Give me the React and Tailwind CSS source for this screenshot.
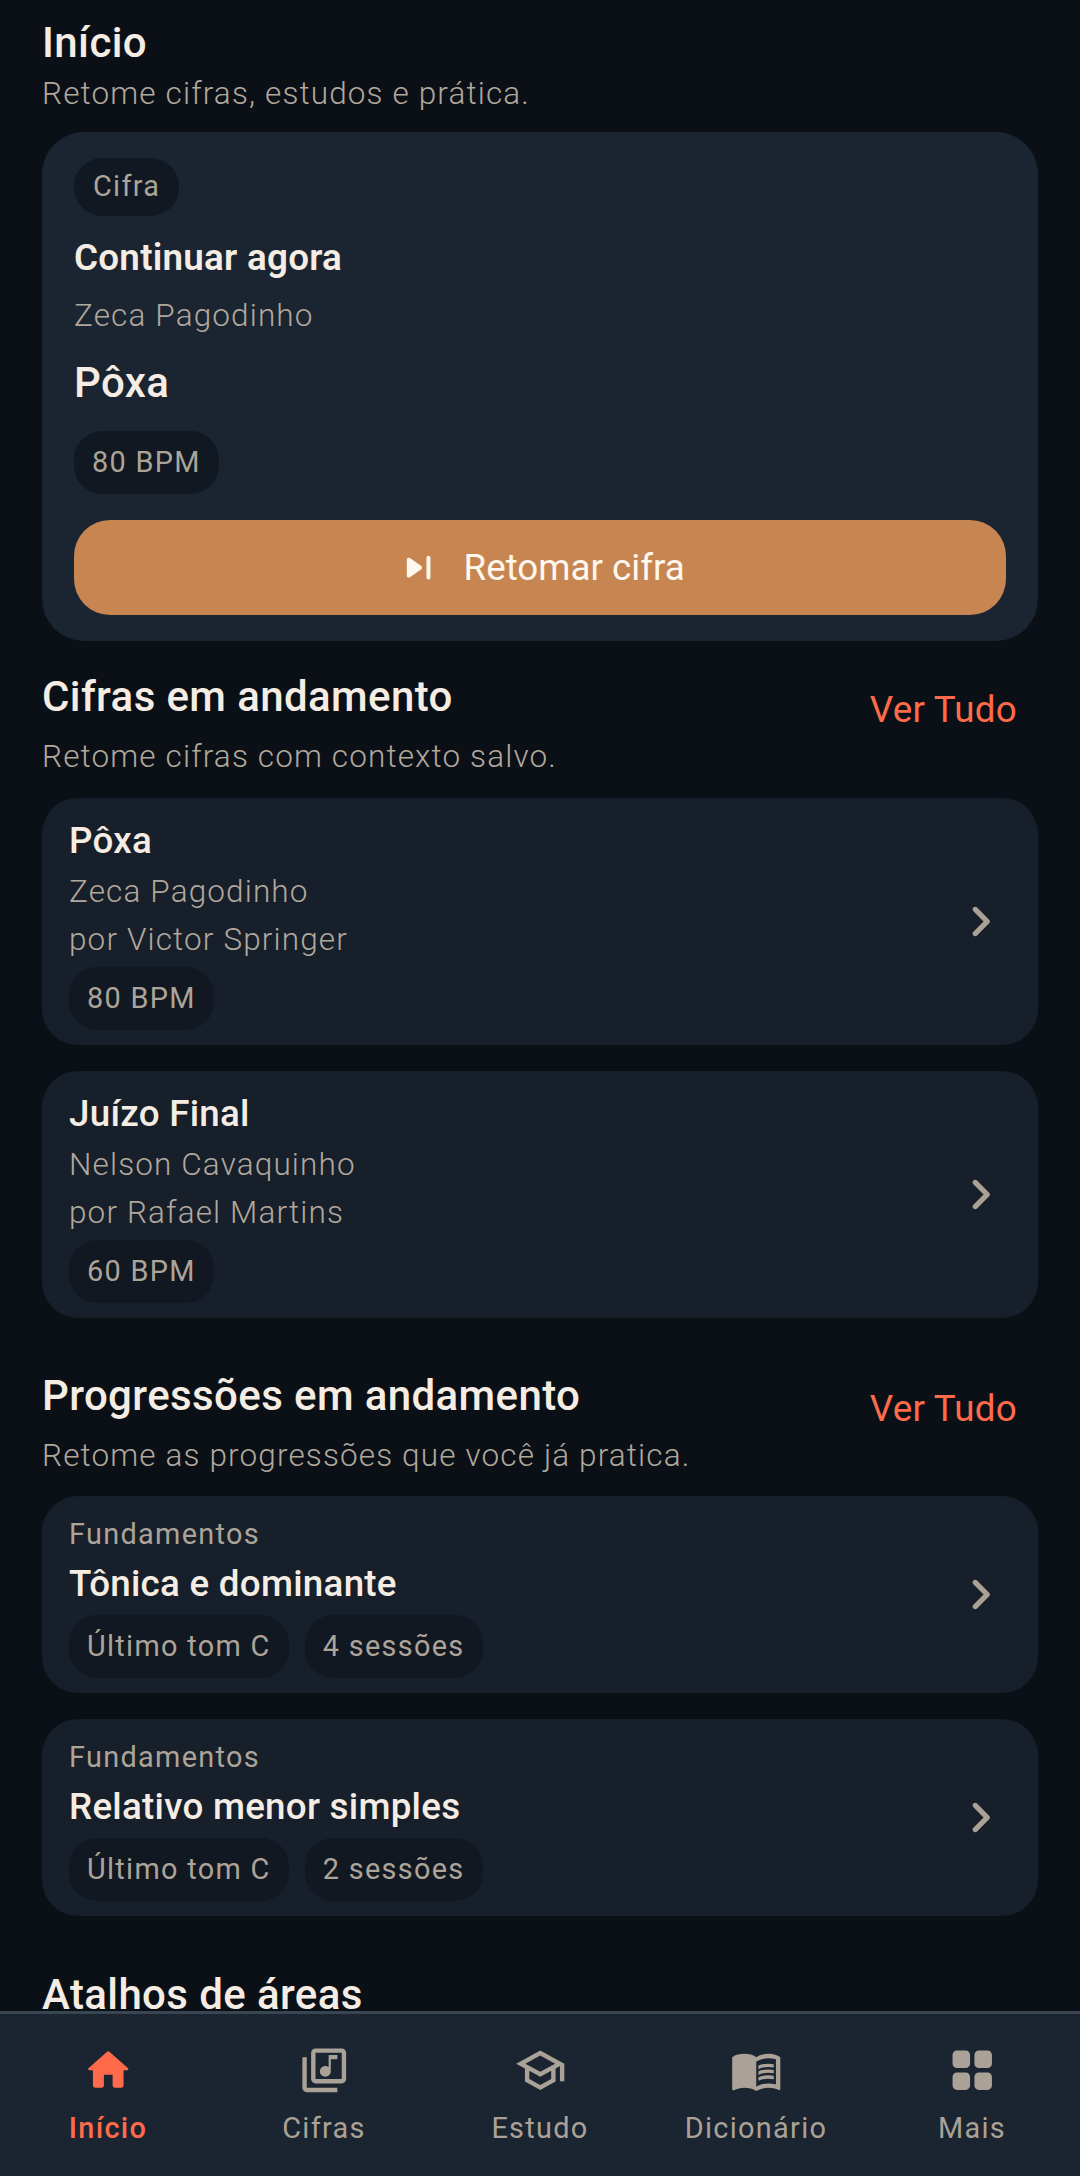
import React from "react";

const Chip = ({ children, className = "h-[63px]" }) => (
  <span className={`inline-flex items-center self-start rounded-[28px] bg-[#111821] px-[18px] text-[28.875px] tracking-[1.31px] text-[#ada499] ${className}`}>
    {children}
  </span>
);

const Chevron = () => (
  <svg width="63" height="63" viewBox="0 0 24 24" fill="#aba297" className="shrink-0">
    <path d="M9.29 6.71c-.39.39-.39 1.02 0 1.41L13.17 12l-3.88 3.88c-.39.39-.39 1.02 0 1.41.39.39 1.02.39 1.41 0l4.59-4.59c.39-.39.39-1.02 0-1.41L10.7 6.7c-.38-.38-1.02-.38-1.41.01z" />
  </svg>
);

const SectionHead = ({ title, sub, link, topClass = "" }) => (
  <div className={`flex items-start justify-between ${topClass}`}>
    <div>
      <h2 className="text-[42px] leading-[50px] font-medium tracking-[0.39px] text-[#f5ede3]">{title}</h2>
      <p className="mt-[14px] text-[31.5px] leading-[42px] font-light tracking-[1.13px] text-[#b1a89d]">{sub}</p>
    </div>
    {link && <span className="mt-[13px] mr-[21px] text-[36.75px] leading-[50px] tracking-[0.26px] text-[#ff6b4a]">{link}</span>}
  </div>
);

const CifraCard = ({ title, artist, by, bpm }) => (
  <div className="flex h-[247px] items-center justify-between rounded-[36px] bg-[#171f2a] pr-[26px] pl-[27px]">
    <div className="flex flex-col self-start pt-[18px]">
      <div className="text-[36.75px] leading-[50px] font-medium tracking-[0.26px] text-[#f5ede3]">{title}</div>
      <div className="mt-[2px] text-[31.5px] leading-[48px] font-light tracking-[1.13px] text-[#b1a89d]">{artist}</div>
      <div className="text-[31.5px] leading-[48px] font-light tracking-[1.13px] text-[#b1a89d]">{by}</div>
      <div className="mt-[3px] flex"><Chip>{bpm}</Chip></div>
    </div>
    <Chevron />
  </div>
);

const ProgCard = ({ title, sessions }) => (
  <div className="flex h-[197px] items-center justify-between rounded-[36px] bg-[#171f2a] pr-[26px] pl-[27px]">
    <div className="flex flex-col self-start pt-[18px]">
      <div className="text-[28.875px] leading-[40px] tracking-[1.31px] text-[#ada499]">Fundamentos</div>
      <div className="mt-[5px] text-[36.75px] leading-[50px] font-medium tracking-[0.26px] text-[#f5ede3]">{title}</div>
      <div className="mt-[6px] flex gap-[16px]">
        <Chip>Último tom C</Chip>
        <Chip>{sessions}</Chip>
      </div>
    </div>
    <Chevron />
  </div>
);

const Icon = ({ color = "#aba297", d }) => (
  <svg width="52.5" height="52.5" viewBox="0 0 24 24" fill={color}>
    <path d={d} />
  </svg>
);

const HOME = "M10 19v-5h4v5c0 .55.45 1 1 1h3c.55 0 1-.45 1-1v-7h1.7c.46 0 .68-.57.33-.87L12.67 3.6c-.38-.34-.96-.34-1.34 0l-8.36 7.53c-.34.3-.13.87.33.87H5v7c0 .55.45 1 1 1h3c.55 0 1-.45 1-1z";
const LIBRARY = "M20 2H8c-1.1 0-2 .9-2 2v12c0 1.1.9 2 2 2h12c1.1 0 2-.9 2-2V4c0-1.1-.9-2-2-2zm0 14H8V4h12v12zm-7.5-1c1.38 0 2.5-1.12 2.5-2.5V7h3V5h-4v5.51c-.42-.32-.93-.51-1.5-.51-1.38 0-2.5 1.12-2.5 2.5s1.12 2.5 2.5 2.5zM4 6H2v14c0 1.1.9 2 2 2h14v-2H4V6z";
const SCHOOL = "M12 3L1 9l4 2.18v6L12 21l7-3.82v-6l2-1.09V17h2V9L12 3zm6.82 6L12 12.72 5.18 9 12 5.28 18.82 9zM17 15.99l-5 2.73-5-2.73v-3.72L12 15l5-2.73v3.72z";
const BOOK = "M21 5c-1.11-.35-2.33-.5-3.5-.5-1.95 0-4.05.4-5.5 1.5-1.45-1.1-3.55-1.5-5.5-1.5S2.45 4.9 1 6v14.65c0 .25.25.5.5.5.1 0 .15-.05.25-.05C3.1 20.45 5.05 20 6.5 20c1.95 0 4.05.4 5.5 1.5 1.35-.85 3.8-1.5 5.5-1.5 1.65 0 3.35.3 4.75 1.05.1.05.15.05.25.05.25 0 .5-.25.5-.5V6c-.6-.45-1.25-.75-2-1zm0 13.5c-1.1-.35-2.3-.5-3.5-.5-1.7 0-4.15.65-5.5 1.5V8c1.35-.85 3.8-1.5 5.5-1.5 1.2 0 2.4.15 3.5.5v11.5zM17.5 10.5c.88 0 1.73.09 2.5.26V9.24c-.79-.15-1.64-.24-2.5-.24-1.7 0-3.24.29-4.5.83v1.66c1.13-.64 2.7-.99 4.5-.99zM13 12.49v1.66c1.13-.64 2.7-.99 4.5-.99.88 0 1.73.09 2.5.26V11.9c-.79-.15-1.64-.24-2.5-.24-1.7 0-3.24.3-4.5.83zM17.5 14.33c-1.7 0-3.24.29-4.5.83v1.66c1.13-.64 2.7-.99 4.5-.99.88 0 1.73.09 2.5.26v-1.52c-.79-.16-1.64-.24-2.5-.24z";
const GRID = "M5 11h4c1.1 0 2-.9 2-2V5c0-1.1-.9-2-2-2H5c-1.1 0-2 .9-2 2v4c0 1.1.9 2 2 2zm0 10h4c1.1 0 2-.9 2-2v-4c0-1.1-.9-2-2-2H5c-1.1 0-2 .9-2 2v4c0 1.1.9 2 2 2zm8-16v4c0 1.1.9 2 2 2h4c1.1 0 2-.9 2-2V5c0-1.1-.9-2-2-2h-4c-1.1 0-2 .9-2 2zm2 16h4c1.1 0 2-.9 2-2v-4c0-1.1-.9-2-2-2h-4c-1.1 0-2 .9-2 2v4c0 1.1.9 2 2 2z";

const NavItem = ({ d, label, active }) => (
  <div className="flex flex-1 flex-col items-center">
    <div className="flex h-[52.5px] items-center justify-center">
      <Icon d={d} color={active ? "#ff6b4a" : "#aba297"} />
    </div>
    <span className={`mt-[13.5px] text-[28.875px] leading-[36px] tracking-[1.31px] ${active ? "font-medium text-[#ff6b4a]" : "text-[#aba297]"}`}>{label}</span>
  </div>
);

export default function App() {
  return (
    <div className="flex h-[2176px] w-[1080px] flex-col overflow-hidden bg-[#0b1017] font-['Roboto',sans-serif]">
      <main className="min-h-0 flex-1 overflow-hidden px-[42px] pt-[18px]">
        <h1 className="text-[42px] leading-[50px] font-medium tracking-[0.39px] text-[#f5ede3]">Início</h1>
        <p className="mt-[5px] text-[31.5px] leading-[42px] font-light tracking-[1.13px] text-[#b1a89d]">Retome cifras, estudos e prática.</p>
        <section className="mt-[17px] flex h-[509px] flex-col rounded-[42px] bg-[#1b2531] px-[32px] pt-[26px]">
          <Chip className="h-[58px] px-[19px]">Cifra</Chip>
          <div className="mt-[18px] text-[36.75px] leading-[48px] font-semibold tracking-[0.26px] text-[#f5ede3]">Continuar agora</div>
          <div className="mt-[12px] text-[31.5px] leading-[44px] font-light tracking-[1.13px] text-[#b1a89d]">Zeca Pagodinho</div>
          <div className="mt-[17px] text-[42px] leading-[56px] font-medium tracking-[0.39px] text-[#f5ede3]">Pôxa</div>
          <div className="mt-[20px] flex"><Chip>80 BPM</Chip></div>
          <button className="mt-[26px] flex h-[95px] items-center justify-center gap-[21px] rounded-[36px] bg-[#c78651] text-[36.75px] text-[#fff8ef]">
            <svg width="47.25" height="47.25" viewBox="0 0 24 24" fill="#fff8ef">
              <path d="M7.58 16.89l5.77-4.07c.56-.4.56-1.24 0-1.63L7.58 7.11C6.91 6.65 6 7.12 6 7.93v8.14c0 .81.91 1.28 1.58.82zM16 7v10c0 .55.45 1 1 1s1-.45 1-1V7c0-.55-.45-1-1-1s-1 .45-1 1z" />
            </svg>
            Retomar cifra
          </button>
        </section>

        <SectionHead topClass="mt-[31px]" title="Cifras em andamento" sub="Retome cifras com contexto salvo." link="Ver Tudo" />
        <div className="mt-[20px] flex flex-col gap-[26px]">
          <CifraCard title="Pôxa" artist="Zeca Pagodinho" by="por Victor Springer" bpm="80 BPM" />
          <CifraCard title="Juízo Final" artist="Nelson Cavaquinho" by="por Rafael Martins" bpm="60 BPM" />
        </div>

        <SectionHead topClass="mt-[53px]" title="Progressões em andamento" sub="Retome as progressões que você já pratica." link="Ver Tudo" />
        <div className="mt-[19px] flex flex-col gap-[26px]">
          <ProgCard title="Tônica e dominante" sessions="4 sessões" />
          <ProgCard title="Relativo menor simples" sessions="2 sessões" />
        </div>

        <div className="mt-[54px] text-[42px] leading-[50px] font-medium tracking-[0.39px] text-[#f5ede3]">Atalhos de áreas</div>
      </main>
      <nav className="flex h-[165px] shrink-0 items-start border-t-[3px] border-[#3a4552] bg-[#1b2531] pt-[30px]">
        <NavItem active d={HOME} label="Início" />
        <NavItem d={LIBRARY} label="Cifras" />
        <NavItem d={SCHOOL} label="Estudo" />
        <NavItem d={BOOK} label="Dicionário" />
        <NavItem d={GRID} label="Mais" />
      </nav>
    </div>
  );
}
